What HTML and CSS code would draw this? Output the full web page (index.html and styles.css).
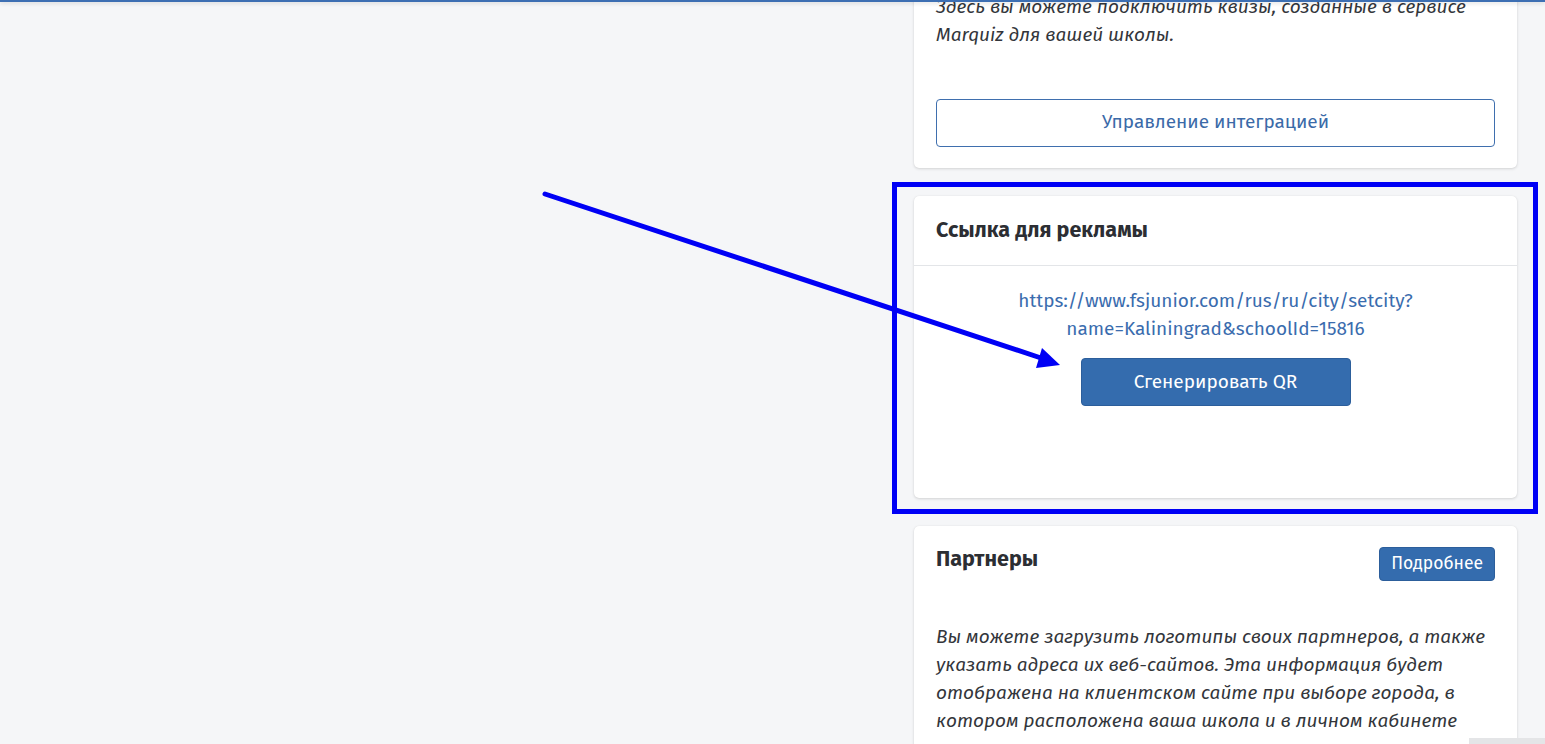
FILE: index.html
```html
<!DOCTYPE html>
<html lang="ru">
<head>
<meta charset="utf-8">
<title>Настройки школы</title>
<link rel="stylesheet" href="styles.css">
</head>
<body>
<div class="topbar"></div>
<main class="page">
  <section class="column">
    <div class="card card-quiz">
      <p class="note">Здесь вы можете подключить квизы, созданные в сервисе<br>Marquiz для вашей школы.</p>
      <button class="btn-outline">Управление интеграцией</button>
    </div>

    <div class="card card-ad">
      <div class="card-head">
        <h3 class="card-title">Ссылка для рекламы</h3>
      </div>
      <div class="card-body center">
        <a class="ad-link" href="#">https://www.fsjunior.com/rus/ru/city/setcity?<br>name=Kaliningrad&amp;schoolId=15816</a>
        <button class="btn-primary btn-qr">Сгенерировать QR</button>
      </div>
    </div>

    <div class="card card-partners">
      <div class="card-head plain">
        <h3 class="card-title">Партнеры</h3>
        <button class="btn-primary btn-small">Подробнее</button>
      </div>
      <p class="note partners-note">Вы можете загрузить логотипы своих партнеров, а также<br>указать адреса их веб-сайтов. Эта информация будет<br>отображена на клиентском сайте при выборе города, в<br>котором расположена ваша школа и в личном кабинете<br>клиента.</p>
    </div>
  </section>
</main>

<div class="highlight"></div>
<svg class="arrow" width="1545" height="744" viewBox="0 0 1545 744" aria-hidden="true">
  <line x1="545" y1="194" x2="1041" y2="358" stroke="#0000f5" stroke-width="5" stroke-linecap="round"/>
  <polygon points="1060,365 1042,348 1036,368" fill="#0000f5"/>
</svg>
<div class="hscroll"></div>
</body>
</html>
```

FILE: styles.css
```css
* { box-sizing: border-box; }

html, body {
  margin: 0;
  padding: 0;
  height: 744px;
  overflow: hidden;
}

body {
  background: #f5f6f8;
  font-family: "Fira Sans", Roboto, "Noto Sans", sans-serif;
  color: #33363b;
  position: relative;
}

.topbar {
  position: absolute;
  top: 0;
  left: 0;
  right: 0;
  height: 2px;
  background: #3d6fb3;
  box-shadow: 0 1px 4px rgba(0, 0, 0, 0.18);
  z-index: 5;
}

.page {
  display: flex;
  justify-content: flex-end;
  padding-right: 28px;
}

.column {
  width: 603px;
  margin-top: -61px;
  display: flex;
  flex-direction: column;
  gap: 28px;
}

.card {
  background: #fff;
  border-radius: 5px;
  box-shadow: 0 1px 3px rgba(0, 0, 0, 0.14), 0 0 1px rgba(0, 0, 0, 0.08);
}

.card-quiz {
  padding: 54px 22px 21px;
}

.note {
  margin: 0;
  font-style: italic;
  font-size: 19px;
  line-height: 28px;
  color: #33363b;
}

.card-quiz .note {
  margin-bottom: 50px;
}

.btn-outline {
  display: block;
  width: 100%;
  height: 48px;
  padding: 0 0 3px;
  border: 1px solid #3f6fae;
  border-radius: 4px;
  background: #fff;
  color: #3b6aa8;
  font-family: inherit;
  font-size: 19px;
}

.card-head {
  height: 70px;
  padding: 0 22px 2px;
  display: flex;
  align-items: center;
  border-bottom: 1px solid #e3e5e8;
}

.card-head.plain {
  border-bottom: none;
  height: auto;
  padding: 21px 22px 0;
  align-items: flex-start;
  justify-content: space-between;
}

.card-title {
  margin: 0;
  font-size: 21.5px;
  font-weight: 700;
  color: #2c2e33;
}

.card-head.plain .card-title {
  line-height: 24px;
}

.card-body {
  padding: 21px 22px 92px;
}

.center {
  display: flex;
  flex-direction: column;
  align-items: center;
  text-align: center;
}

.ad-link {
  color: #3a6cae;
  text-decoration: none;
  font-size: 19px;
  line-height: 28px;
}

.btn-primary {
  background: #346cae;
  border: 1px solid #2c5e9b;
  color: #fff;
  border-radius: 4px;
  font-family: inherit;
}

.btn-qr {
  margin-top: 15px;
  width: 270px;
  height: 48px;
  padding: 0 0 2px;
  font-size: 19px;
}

.btn-small {
  height: 34px;
  padding: 0 11px 1px;
  font-size: 17.5px;
}

.partners-note {
  padding: 42px 22px 30px;
}

.highlight {
  position: absolute;
  left: 892px;
  top: 182px;
  width: 646px;
  height: 332px;
  border: 5px solid #0000f5;
  z-index: 3;
}

.arrow {
  position: absolute;
  left: 0;
  top: 0;
  z-index: 4;
  pointer-events: none;
}

.hscroll {
  position: absolute;
  left: 1469px;
  top: 738px;
  width: 76px;
  height: 6px;
  background: #e4e5e7;
  z-index: 6;
}
```
